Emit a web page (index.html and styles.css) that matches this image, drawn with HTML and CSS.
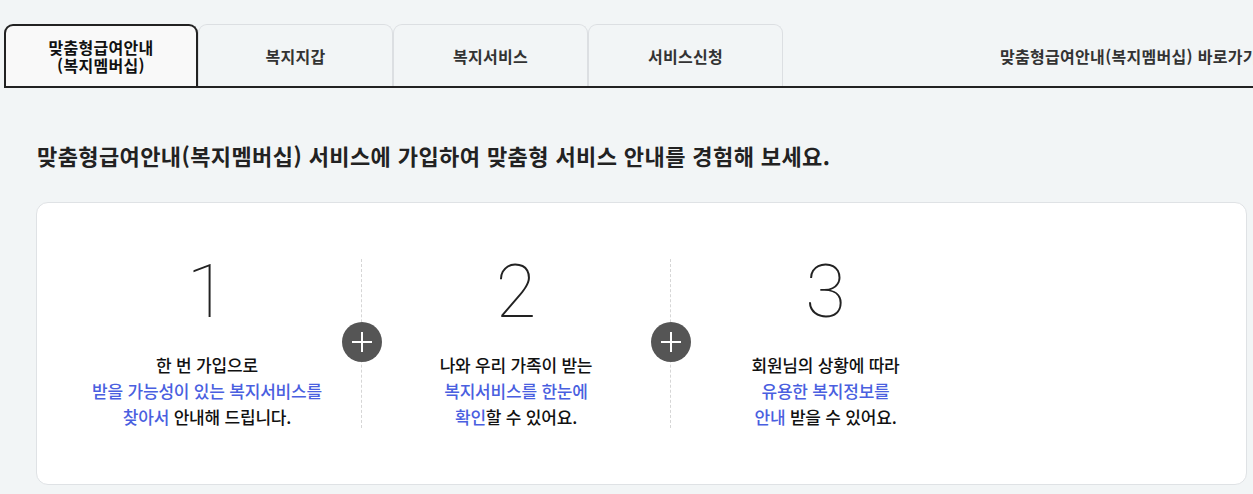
FILE: index.html
```html
<!DOCTYPE html>
<html lang="ko">
<head>
<meta charset="utf-8">
<title>맞춤형급여안내</title>
<link rel="stylesheet" href="styles.css">
</head>
<body>
<div class="page">
  <nav class="tabs">
    <a class="tab active" href="#">맞춤형급여안내<br>(복지멤버십)</a>
    <a class="tab" href="#">복지지갑</a>
    <a class="tab" href="#">복지서비스</a>
    <a class="tab" href="#">서비스신청</a>
    <a class="shortcut" href="#">맞춤형급여안내(복지멤버십) 바로가기</a>
  </nav>
  <h2 class="title">맞춤형급여안내(복지멤버십) 서비스에 가입하여 맞춤형 서비스 안내를 경험해 보세요.</h2>
  <section class="card">
    <div class="step">
      <div class="num">1</div>
      <p class="desc">한 번 가입으로<br><em>받을 가능성이 있는 복지서비스를</em><br><em>찾아서</em> 안내해 드립니다.</p>
      <span class="plus"></span>
    </div>
    <div class="step">
      <div class="num">2</div>
      <p class="desc">나와 우리 가족이 받는<br><em>복지서비스를 한눈에</em><br><em>확인</em>할 수 있어요.</p>
      <span class="plus"></span>
    </div>
    <div class="step last">
      <div class="num">3</div>
      <p class="desc">회원님의 상황에 따라<br><em>유용한 복지정보를</em><br><em>안내</em> 받을 수 있어요.</p>
    </div>
  </section>
</div>
</body>
</html>
```
FILE: styles.css
```css
* { box-sizing: border-box; }
html, body {
  margin: 0;
  padding: 0;
  background: #f2f5f6;
  overflow: hidden;
}
body {
  font-family: "Noto Sans CJK KR", "Noto Sans", sans-serif;
  color: #222;
}
.page {
  width: 1253px;
  height: 494px;
  overflow: hidden;
}
.tabs {
  display: flex;
  align-items: stretch;
  margin: 24px 0 0 4px;
  height: 64px;
  border-bottom: 2px solid #222;
  white-space: nowrap;
  overflow: hidden;
}
.tab {
  width: 195px;
  flex: none;
  display: flex;
  align-items: center;
  justify-content: center;
  text-align: center;
  font-size: 16px;
  font-weight: 700;
  line-height: 19px;
  color: #333;
  text-decoration: none;
  border: 1px solid #dcdfe2;
  border-bottom: none;
  border-radius: 9px 9px 0 0;
  letter-spacing: 0.3px;
  padding-top: 2px;
}
.tab.active {
  width: 194px;
  border: 2px solid #222;
  border-bottom: none;
  background: #f9f9f9;
  color: #111;
  padding-top: 0;
  line-height: 18px;
}
.shortcut {
  flex: none;
  margin-left: 217px;
  display: flex;
  align-items: center;
  font-size: 16px;
  font-weight: 700;
  color: #333;
  text-decoration: none;
  letter-spacing: 0.3px;
  padding-top: 2px;
}
.title {
  margin: 52px 0 0 37px;
  font-size: 22px;
  font-weight: 700;
  line-height: 30px;
  letter-spacing: 0.4px;
  color: #222;
  white-space: nowrap;
}
.card {
  margin: 32px 6px 0 36px;
  height: 283px;
  background: #fff;
  border: 1px solid #dfe2e5;
  border-radius: 12px;
  display: flex;
  padding: 56px 16px 0;
}
.step {
  position: relative;
  width: 309px;
  height: 169px;
  border-right: 1px dashed #d6d6d6;
  display: flex;
  flex-direction: column;
  align-items: center;
}
.step.last { border-right: none; }
.num {
  font-family: Roboto, "Noto Sans CJK KR", sans-serif;
  font-size: 74px;
  font-weight: 100;
  line-height: 72px;
  margin-top: -3px;
  color: #222;
}
.desc {
  margin: 24px 0 0;
  text-align: center;
  font-size: 17px;
  font-weight: 500;
  line-height: 26px;
  letter-spacing: -0.2px;
  color: #111;
}
.desc em {
  font-style: normal;
  color: #4a5fe0;
}
.plus {
  position: absolute;
  right: -21px;
  top: 63px;
  width: 40px;
  height: 40px;
  border-radius: 50%;
  background: #555;
}
.plus::before, .plus::after {
  content: "";
  position: absolute;
  left: 50%;
  top: 50%;
  background: #fff;
}
.plus::before { width: 20px; height: 2px; margin: -1px 0 0 -10px; }
.plus::after { width: 2px; height: 20px; margin: -10px 0 0 -1px; }
```
